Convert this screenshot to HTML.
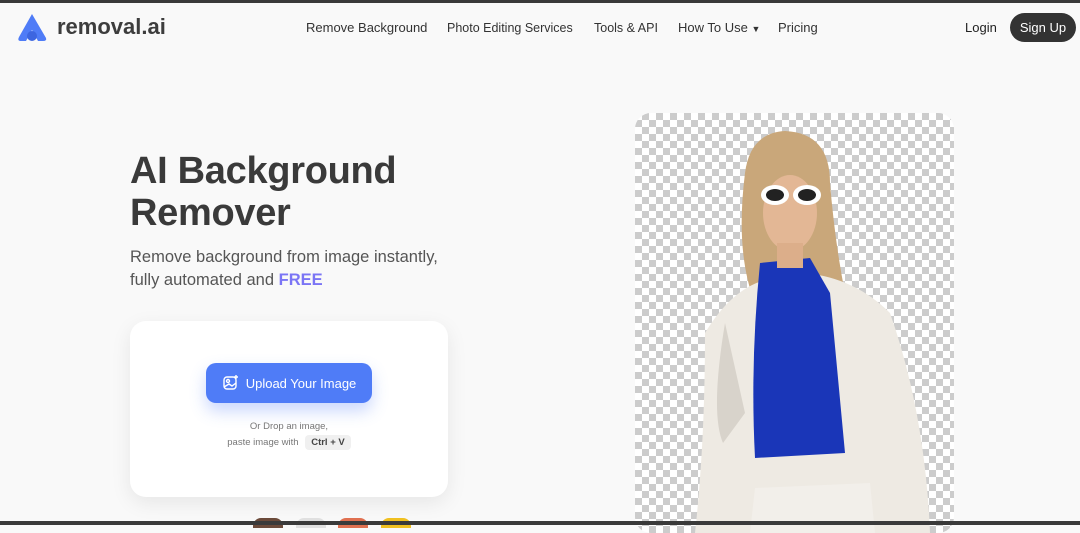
<!DOCTYPE html>
<html><head><style>
*{margin:0;padding:0;box-sizing:border-box}
body{width:1080px;height:525px;overflow:hidden;background:#f9f9f9;font-family:"Liberation Sans",sans-serif;position:relative;color:#333}
.top{position:absolute;left:0;top:0;width:1080px;height:3px;background:#3a3a3a;z-index:5}
.bot{position:absolute;left:0;top:521px;width:1080px;height:4px;background:#3a3a3a;z-index:5}
.logo{position:absolute;left:16px;top:12px;display:flex;align-items:center}
.logo span{font-size:22px;font-weight:bold;color:#3d3d3d;margin-left:8px}
.nav{position:absolute;top:20px;height:16px;line-height:16px;font-size:13px;color:#333}
.login{position:absolute;left:965px;top:20px;font-size:13px;color:#222}
.signup{position:absolute;left:1010px;top:13px;width:66px;height:29px;border-radius:15px;background:#333;color:#fff;font-size:13px;text-align:center;line-height:29px}
h1{position:absolute;left:130px;top:150px;font-size:38px;line-height:42px;color:#3a3a3a;font-weight:bold;letter-spacing:-0.3px}
.sub{position:absolute;left:130px;top:246px;font-size:16.5px;line-height:23px;color:#555}
.sub b{color:#7b75f5}
.card{position:absolute;left:130px;top:321px;width:318px;height:176px;background:#fff;border-radius:16px;box-shadow:0 6px 20px rgba(0,0,0,.08)}
.btn{position:absolute;left:76px;top:42px;width:166px;height:40px;background:#4f7cf7;border-radius:10px;color:#fff;font-size:13px;display:flex;align-items:center;justify-content:center;box-shadow:0 8px 16px rgba(79,124,247,.3)}
.t{position:absolute;width:318px;text-align:center;font-size:9.5px;color:#777}
.kbd{background:#f0f0f0;border-radius:4px;padding:2px 6px;font-weight:bold;color:#444;margin-left:4px}
.chk{position:absolute;left:635px;top:113px;width:319px;height:420px;border-radius:16px;overflow:hidden;
background-color:#fff;background-image:linear-gradient(45deg,#ccc 25%,transparent 25%,transparent 75%,#ccc 75%),linear-gradient(45deg,#ccc 25%,transparent 25%,transparent 75%,#ccc 75%);background-size:14px 14px;background-position:0 0,7px 7px}
.dot{position:absolute;top:518px;width:30px;height:10px;border-radius:8px 8px 0 0}
</style></head><body>
<div class="top"></div>
<div class="logo"><svg width="33" height="30" viewBox="0 0 33 30"><path d="M16 2 L30 26 Q31 29 27 29 L22 29 L16 18 L10 29 L5 29 Q1 29 3 25 Z" fill="#4f7cf7"/><circle cx="16" cy="24" r="5" fill="#3d66e0"/></svg><span>removal.ai</span></div>
<div class="nav" style="left:306px">Remove Background</div>
<div class="nav" style="left:447px;font-size:12.5px">Photo Editing Services</div>
<div class="nav" style="left:594px;font-size:12.5px">Tools &amp; API</div>
<div class="nav" style="left:678px">How To Use <span style="font-size:9px">▼</span></div>
<div class="nav" style="left:778px">Pricing</div>
<div class="login">Login</div>
<div class="signup">Sign Up</div>
<h1>AI Background<br>Remover</h1>
<div class="sub">Remove background from image instantly,<br>fully automated and <b>FREE</b></div>
<div class="card">
<div class="btn"><svg width="18" height="18" viewBox="0 0 18 18" fill="none" stroke="#fff" stroke-width="1.4"><rect x="2" y="3" width="12" height="12" rx="3"/><circle cx="6" cy="7" r="1.5"/><path d="M2 13 L7 10 L10 12 L14 9"/><path d="M14 1 V5 M12 3 H16"/></svg><span style="margin-left:6px">Upload Your Image</span></div>
<div class="t" style="top:100px">Or Drop an image,</div>
<div class="t" style="top:116px">paste image with <span class="kbd">Ctrl + V</span></div>
</div>
<div class="dot" style="left:253px;background:#6b4a3a"></div>
<div class="dot" style="left:296px;background:#e0e0e0"></div>
<div class="dot" style="left:338px;background:#e07050"></div>
<div class="dot" style="left:381px;background:#f0c020"></div>
<div class="chk">
<svg width="319" height="420" viewBox="0 0 319 420">
<path d="M110 60 Q115 20 150 18 Q195 20 195 70 Q200 130 210 180 L120 190 Q100 140 110 60Z" fill="#c9a77a"/>
<path d="M70 220 Q100 170 140 165 L170 160 Q220 165 255 200 Q290 300 295 420 L60 420 Q70 330 70 220Z" fill="#eeeae3"/>
<path d="M125 150 L175 145 L195 180 L210 340 L120 345 Q115 250 125 150Z" fill="#1a36b8"/>
<path d="M120 375 L235 370 L240 420 L115 420Z" fill="#f2efea"/>
<ellipse cx="155" cy="100" rx="27" ry="38" fill="#e3b795"/>
<rect x="142" y="130" width="26" height="25" fill="#dcae8a"/>
<ellipse cx="140" cy="82" rx="14" ry="10" fill="#fff"/><ellipse cx="172" cy="82" rx="14" ry="10" fill="#fff"/>
<ellipse cx="140" cy="82" rx="9" ry="6" fill="#222"/><ellipse cx="172" cy="82" rx="9" ry="6" fill="#222"/>
<path d="M90 210 Q75 300 88 330 L110 300Z" fill="#d8d3cb"/>
</svg></div>
<div class="bot"></div>
</body></html>
